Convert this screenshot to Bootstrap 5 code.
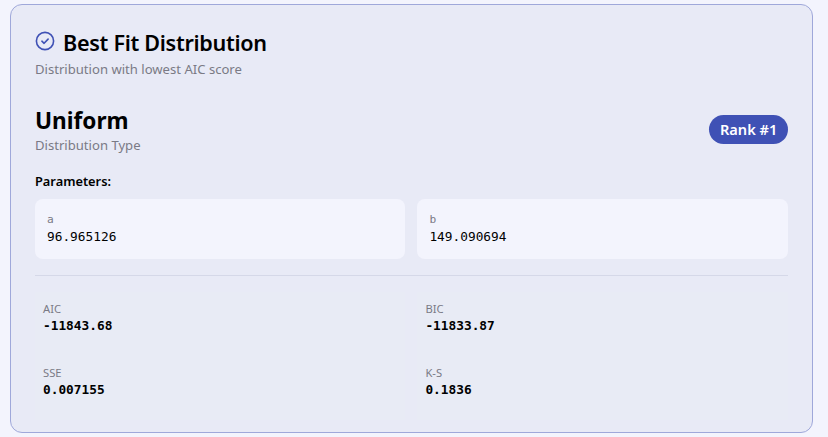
<!DOCTYPE html>
<html lang="en">
<head>
<meta charset="utf-8">
<title>Best Fit Distribution</title>
<link href="https://cdn.jsdelivr.net/npm/bootstrap@5.3.0/dist/css/bootstrap.min.css" rel="stylesheet">
<style>
html,body{height:100%;}
body{background:#f3f4fd;font-family:"Noto Sans","Open Sans",sans-serif;color:#000;overflow:hidden;padding:4px 15.2px 4px 10px;}
.fit-panel{background:#e8eaf6;border:1px solid #9fa8da;border-radius:12px;padding:24px;height:429px;}
.fit-title{font-size:21.6px;font-weight:600;line-height:30px;letter-spacing:-.3px;margin:-1px 0 1px;}
.fit-sub{font-size:13.1px;color:#7a7a85;line-height:18px;}
.fit-icon{width:20px;height:20px;color:#3f51b5;flex:none;margin-top:-6px;}
.fit-head{margin-bottom:27px;}
.fit-title-row{margin-bottom:1px;}
.fit-name{font-size:22.6px;font-weight:700;line-height:31px;margin:0;}
.fit-rank{background:#3f51b5;color:#fff;font-size:14.6px;font-weight:600;line-height:19px;padding:5px 10.5px;border-radius:15px;}
.fit-label{font-size:12.8px;font-weight:600;line-height:17px;margin:19px 0 9px;}
.param-box{background:#f3f4fd;border-radius:8px;padding:12px;height:60px;}
.param-row{gap:12px;}
.param-key{font-size:11.2px;color:#7a7a85;line-height:17px;font-family:"DejaVu Sans Mono",monospace;}
.param-val{font-family:"DejaVu Sans Mono",monospace;font-size:12.8px;line-height:17px;}
.fit-rule{border-top:1px solid #d5d8e8;margin:16px 0;}
.stat-grid{display:grid;grid-template-columns:1fr 1fr;column-gap:12px;}
.stat-cell{padding:8px;height:64px;background:#e8ebf5;}
.stat-key{font-size:11.2px;color:#7a7a85;line-height:17px;}
.stat-val{font-family:"DejaVu Sans Mono",monospace;font-size:12.8px;font-weight:700;line-height:17px;}
</style>
</head>
<body>
<div class="fit-panel">
  <div class="fit-head">
    <div class="d-flex align-items-center gap-2 fit-title-row">
      <svg class="fit-icon" viewBox="0 0 20 20" fill="none" stroke="currentColor" stroke-width="1.6" stroke-linecap="round" stroke-linejoin="round" aria-hidden="true"><circle cx="10" cy="10" r="8.6"/><path d="M6.9 10.2l2.2 2.1 4-4.2"/></svg>
      <h2 class="fit-title">Best Fit Distribution</h2>
    </div>
    <div class="fit-sub">Distribution with lowest AIC score</div>
  </div>
  <div class="d-flex justify-content-between align-items-center">
    <div>
      <h3 class="fit-name">Uniform</h3>
      <div class="fit-sub">Distribution Type</div>
    </div>
    <span class="fit-rank">Rank #1</span>
  </div>
  <div class="fit-label">Parameters:</div>
  <div class="d-flex param-row">
    <div class="col param-box"><div class="param-key">a</div><div class="param-val">96.965126</div></div>
    <div class="col param-box"><div class="param-key">b</div><div class="param-val">149.090694</div></div>
  </div>
  <div class="fit-rule"></div>
  <div class="stat-grid">
    <div class="stat-cell"><div class="stat-key">AIC</div><div class="stat-val">-11843.68</div></div>
    <div class="stat-cell"><div class="stat-key">BIC</div><div class="stat-val">-11833.87</div></div>
    <div class="stat-cell"><div class="stat-key">SSE</div><div class="stat-val">0.007155</div></div>
    <div class="stat-cell"><div class="stat-key">K-S</div><div class="stat-val">0.1836</div></div>
  </div>
</div>
</body>
</html>
